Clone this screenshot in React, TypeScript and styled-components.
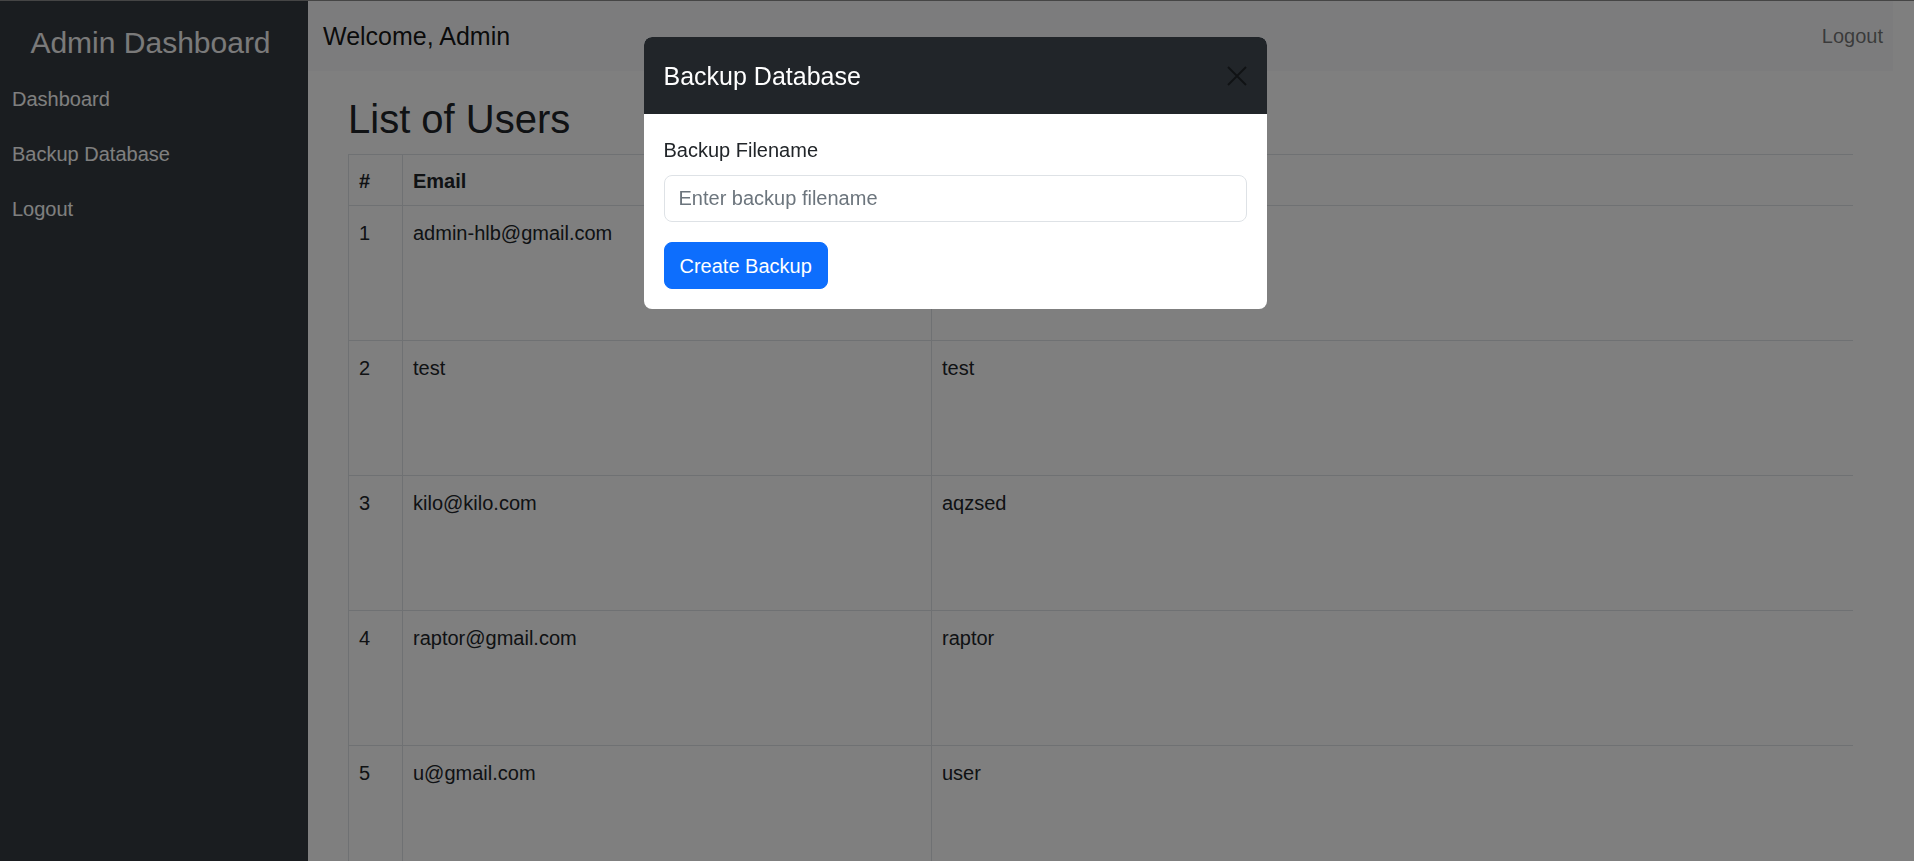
import React from "react";
import styled, { createGlobalStyle } from "styled-components";

const Global = createGlobalStyle`
  html, body { margin: 0; padding: 0; }
  body {
    font-family: "Liberation Sans", Arial, sans-serif;
    color: #212529;
    background: #ffffff;
    overflow: hidden;
  }
  * { box-sizing: border-box; }
`;

const Shell = styled.div`
  display: flex;
  height: 100vh;
  overflow: hidden;
  border-top: 1px solid #8a8a8a;
`;

const Sidebar = styled.aside`
  width: 308px;
  flex: 0 0 308px;
  background: #343a40;
  display: flex;
  flex-direction: column;
`;

const Brand = styled.div`
  font-size: 30px;
  line-height: 36px;
  color: #f4f4f4;
  text-align: center;
  padding: 24px 7px 0 0;
  margin-bottom: 11px;
`;

const SideLink = styled.a`
  display: block;
  font-size: 20px;
  line-height: 25px;
  padding: 15px 12px;
  color: #ffffff;
  text-decoration: none;
`;

const Main = styled.main`
  flex: 1;
  display: flex;
  flex-direction: column;
  margin-right: 21px;
  min-width: 0;
`;

const TopBar = styled.header`
  flex: 0 0 70px;
  height: 70px;
  background: #f8f9fa;
  display: flex;
  align-items: center;
  justify-content: space-between;
  padding: 0 10px 0 15px;
`;

const Welcome = styled.span`
  font-size: 25px;
  line-height: 30px;
  color: rgba(0, 0, 0, 0.92);
`;

const TopLogout = styled.a`
  font-size: 20px;
  line-height: 30px;
  color: rgba(0, 0, 0, 0.55);
  text-decoration: none;
`;

const Content = styled.section`
  flex-shrink: 0;
  padding: 0 40px;
`;

const Title = styled.h1`
  font-size: 40px;
  line-height: 48px;
  font-weight: 400;
  margin: 24px 0 11px;
  color: #212529;
`;

const Table = styled.table`
  width: 100%;
  border-collapse: collapse;
  table-layout: fixed;
  font-size: 20px;
  line-height: 30px;
  color: #212529;
`;

const Col = styled.col<{ $w?: number }>`
  width: ${(p) => (p.$w ? `${p.$w}px` : "auto")};
`;

const Th = styled.th`
  border: 1px solid #dee2e6;
  text-align: left;
  font-weight: 700;
  padding: 11px 10px 9px;
  height: 51px;
  &:last-child { border-right: 0; }
`;

const Td = styled.td`
  border: 1px solid #dee2e6;
  vertical-align: top;
  padding: 12px 10px 10px;
  height: 135px;
  &:last-child { border-right: 0; }
`;

const Backdrop = styled.div`
  position: fixed;
  inset: 0;
  background: rgba(0, 0, 0, 0.5);
  z-index: 10;
`;

const ModalLayer = styled.div`
  position: fixed;
  inset: 0;
  z-index: 20;
  display: flex;
  justify-content: center;
  align-items: flex-start;
  padding: 37px 4px 0 0;
`;

const ModalCard = styled.div`
  width: 623px;
  background: #ffffff;
  border-radius: 8px;
  overflow: hidden;
`;

const ModalHeader = styled.div`
  background: #212529;
  height: 77px;
  display: flex;
  align-items: center;
  justify-content: space-between;
  padding: 0 20px;
`;

const ModalTitle = styled.h5`
  margin: 0;
  font-size: 25px;
  line-height: 36px;
  font-weight: 400;
  color: #ffffff;
`;

const CloseBtn = styled.button`
  width: 20px;
  height: 20px;
  padding: 0;
  border: 0;
  background: transparent;
  display: flex;
  opacity: 0.5;
  cursor: pointer;
`;

const ModalBody = styled.div`
  padding: 21px 20px 20px;
  display: flex;
  flex-direction: column;
  align-items: flex-start;
`;

const Label = styled.label`
  font-size: 20px;
  line-height: 30px;
  color: #212529;
  margin-bottom: 10px;
`;

const Input = styled.input`
  width: 100%;
  height: 47px;
  border: 1px solid #dee2e6;
  border-radius: 8px;
  padding: 0 14px;
  font-family: inherit;
  font-size: 20px;
  color: #212529;
  outline: none;
  margin-bottom: 20px;
  &::placeholder { color: #6c757d; }
`;

const PrimaryButton = styled.button`
  height: 47px;
  padding: 0 15px;
  border: 1px solid #0d6efd;
  border-radius: 8px;
  background: #0d6efd;
  color: #ffffff;
  font-family: inherit;
  font-size: 20px;
  line-height: 30px;
  cursor: pointer;
`;

const users = [
  { id: 1, email: "admin-hlb@gmail.com", pass: "admin" },
  { id: 2, email: "test", pass: "test" },
  { id: 3, email: "kilo@kilo.com", pass: "aqzsed" },
  { id: 4, email: "raptor@gmail.com", pass: "raptor" },
  { id: 5, email: "u@gmail.com", pass: "user" },
];

export default function App() {
  return (
    <>
      <Global />
      <Shell>
        <Sidebar>
          <Brand>Admin Dashboard</Brand>
          <SideLink href="#">Dashboard</SideLink>
          <SideLink href="#">Backup Database</SideLink>
          <SideLink href="#">Logout</SideLink>
        </Sidebar>
        <Main>
          <TopBar>
            <Welcome>Welcome, Admin</Welcome>
            <TopLogout href="#">Logout</TopLogout>
          </TopBar>
          <Content>
            <Title>List of Users</Title>
            <Table>
              <colgroup>
                <Col $w={54} />
                <Col $w={529} />
                <Col />
              </colgroup>
              <thead>
                <tr>
                  <Th>#</Th>
                  <Th>Email</Th>
                  <Th>Password</Th>
                </tr>
              </thead>
              <tbody>
                {users.map((u) => (
                  <tr key={u.id}>
                    <Td>{u.id}</Td>
                    <Td>{u.email}</Td>
                    <Td>{u.pass}</Td>
                  </tr>
                ))}
              </tbody>
            </Table>
          </Content>
        </Main>
      </Shell>
      <Backdrop />
      <ModalLayer>
        <ModalCard>
          <ModalHeader>
            <ModalTitle>Backup Database</ModalTitle>
            <CloseBtn aria-label="Close">
              <svg width="20" height="20" viewBox="0 0 20 20">
                <path d="M1 1L19 19M19 1L1 19" stroke="#000" strokeWidth="2" />
              </svg>
            </CloseBtn>
          </ModalHeader>
          <ModalBody>
            <Label>Backup Filename</Label>
            <Input placeholder="Enter backup filename" />
            <PrimaryButton>Create Backup</PrimaryButton>
          </ModalBody>
        </ModalCard>
      </ModalLayer>
    </>
  );
}
